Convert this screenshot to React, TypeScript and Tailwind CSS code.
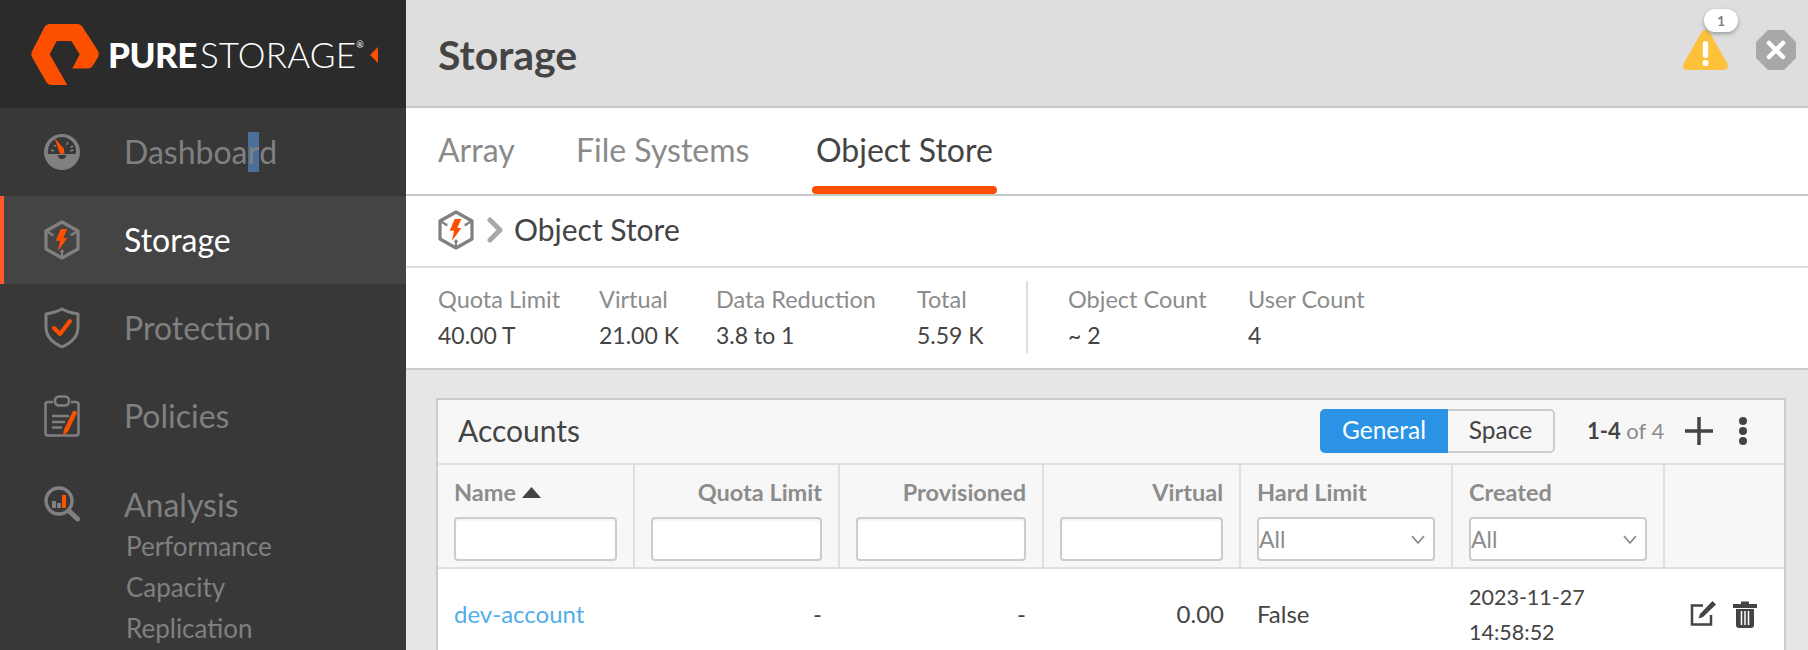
import React from "react";

const F = "font-['Lato','Liberation_Sans',sans-serif]";
const O = "#fc5000";
const G = "#808080";

function StorageIcon({ w = 36, h = 40, c = G }: { w?: number; h?: number; c?: string }) {
  return (
    <svg width={w} height={h} viewBox="0 0 36 40" fill="none">
      <path d="M18 2 L34 11 V29 L18 38 L2 29 V11 Z" stroke={c} strokeWidth="3.200" strokeLinejoin="round" />
      <path d="M3 11.500 L8 14.500 M33 11.500 L28 14.500 M18 37 V31" stroke={c} strokeWidth="2.200" />
      <path d="M6.500 16 L9.500 16 L9.500 13 Z M29.500 16 L26.500 16 L26.500 13 Z M15.500 32 H20.500 L18 29 Z" fill={c} />
      <path d="M16.700 9 H23.300 L19.300 18 H23.300 L14 31 L16 20.700 H11.700 Z" fill={O} />
    </svg>
  );
}

function GaugeIcon() {
  return (
    <svg width="36" height="36" viewBox="0 0 36 36">
      <circle cx="18" cy="18" r="18" fill={G} />
      <path d="M4.300 20 A14 14 0 1 1 31.700 20 Z" fill="#383838" />
      <path d="M22 20 A4 4 0 0 1 14 20 Z" fill="#383838" transform="translate(0 1)" />
      <path d="M7 16 L10 17 M26 17 L29.500 16 M24 8 L22.500 11 M29 12 L26.500 13.500 M10 11 L12 12.500" stroke={G} strokeWidth="1.500" />
      <path d="M10.500 4 L19.800 14.500 L20.500 19.500 L16 20 Z" fill={O} />
    </svg>
  );
}

function ShieldIcon() {
  return (
    <svg width="36" height="42" viewBox="0 0 36 42" fill="none">
      <path d="M18 2 C23 5 28 6 34 7 V20 C34 29 27 36 18 40 C9 36 2 29 2 20 V7 C8 6 13 5 18 2 Z" stroke={G} strokeWidth="3" strokeLinejoin="round" />
      <path d="M10 21 L16 27 L26 14" stroke={O} strokeWidth="4" strokeLinecap="round" strokeLinejoin="round" />
    </svg>
  );
}

function ClipboardIcon() {
  return (
    <svg width="36" height="42" viewBox="0 0 36 42" fill="none">
      <path d="M9 7 H4 Q1.500 7 1.500 9.500 V38 Q1.500 40.500 4 40.500 H32 Q34.500 40.500 34.500 38 V9.500 Q34.500 7 32 7 H27" stroke={G} strokeWidth="2.500" />
      <rect x="11" y="1.500" width="14" height="9" rx="4" stroke={G} strokeWidth="2.500" />
      <path d="M8 21 H25 M8 27 H21 M8 32.500 H18" stroke={G} strokeWidth="2.500" />
      <path d="M30.500 18 L22 35.500" stroke={O} strokeWidth="4.500" strokeLinecap="round" />
      <path d="M19.800 35.500 L19 40 L23 38 Z" fill={O} />
    </svg>
  );
}

function AnalysisIcon() {
  return (
    <svg width="36" height="36" viewBox="0 0 36 36" fill="none">
      <circle cx="15" cy="15" r="13" stroke={G} strokeWidth="3.500" />
      <path d="M25 25 L33.500 33" stroke={G} strokeWidth="5" strokeLinecap="round" />
      <rect x="8" y="15" width="4" height="7" fill={G} />
      <rect x="13" y="17" width="4" height="5" fill={G} />
      <rect x="18" y="9" width="4" height="13" fill={O} />
    </svg>
  );
}

function NavItem({ icon, label, active }: { icon: React.ReactNode; label: React.ReactNode; active?: boolean }) {
  return (
    <div className={`h-[88px] flex items-center ${active ? "bg-[#444444] border-l-4 border-[#ff5a2b] pl-[40px] text-white" : "pl-[44px] text-[#808080]"}`}>
      <div className="w-[36px] flex justify-center">{icon}</div>
      <div className="ml-[44px] text-[32px] leading-[40px]">{label}</div>
    </div>
  );
}

function Sidebar() {
  return (
    <aside className="w-[406px] shrink-0 bg-[#383838] h-full">
      <div className="h-[108px] bg-[#2b2b2b] relative flex items-center pl-[31px]">
        <svg width="68" height="61" viewBox="0 0 68 61" className="shrink-0 mt-[1px]">
          <path d="M18.500 0 H46 Q49.500 0 51.500 3 L66.800 26.500 Q68.800 30 66.800 33.500 L62 41.500 Q60.200 44.500 56.500 44.500 H41.300 L48.700 30.300 L40.300 17 H25.700 L18.700 30.300 L36.300 61 H20.500 Q17 61 15.300 58 L1.200 33.500 Q-0.500 30 1.200 27 L13.500 3 Q15.300 0 18.500 0 Z" fill={O} />
        </svg>
        <div className="ml-[9px] text-white text-[35px] leading-none whitespace-nowrap flex items-start mt-[1px]">
          <span className="font-black tracking-[-0.5px]">PURE</span>
          <span className="font-light ml-[3px] tracking-[0.2px]">STORAGE</span>
          <span className="text-[9px] mt-[3px]">®</span>
        </div>
        <div className="absolute left-[370px] top-[47px] w-0 h-0 border-y-[8px] border-y-transparent border-r-[8px] border-r-[#fc5000]" />
      </div>
      <NavItem
        icon={<GaugeIcon />}
        label={<>Dashboa<span className="inline-block h-[40px] bg-[#4a7099]">r</span>d</>}
      />
      <NavItem active icon={<StorageIcon />} label="Storage" />
      <NavItem icon={<ShieldIcon />} label="Protection" />
      <NavItem icon={<ClipboardIcon />} label="Policies" />
      <div className="h-[67px] flex items-start pl-[44px] pt-[26px] text-[#808080]">
        <div className="w-[36px]"><AnalysisIcon /></div>
        <div className="ml-[44px] text-[32px] leading-[38px]">Analysis</div>
      </div>
      <div className="pl-[126px] text-[26px] text-[#808080] -mt-[1px]">
        <div className="h-[41px] leading-[41px]">Performance</div>
        <div className="h-[41px] leading-[41px]">Capacity</div>
        <div className="h-[41px] leading-[41px]">Replication</div>
      </div>
    </aside>
  );
}

function Header() {
  return (
    <header className="h-[108px] bg-[#dedede] border-b-2 border-[#c8c8c8] relative flex items-center pl-[32px] pt-[3px]">
      <h1 className="text-[41px] font-bold text-[#444444]">Storage</h1>
      <div className="absolute left-[1277px] top-[30px]">
        <svg width="45" height="40" viewBox="0 0 45 40">
          <path d="M22.500 0 Q25 0 27 3 L44 33 Q47 40 40 40 H5 Q-2 40 1 33 L18 3 Q20 0 22.500 0 Z" fill="#fdc13c" />
          <rect x="19.800" y="11" width="5.400" height="17" rx="2.700" fill="#fff" />
          <circle cx="22.500" cy="33" r="3" fill="#fff" />
        </svg>
      </div>
      <div className="absolute left-[1298px] top-[9px] w-[34px] h-[23px] rounded-full bg-white shadow-[0_2px_4px_rgba(0,0,0,0.3)] flex items-center justify-center text-[14px] font-bold text-[#808080]">1</div>
      <div className="absolute left-[1350px] top-[30px]">
        <svg width="40" height="40" viewBox="0 0 40 40">
          <path d="M12 0 H28 L40 12 V28 L28 40 H12 L0 28 V12 Z" fill="#a8a8a8" />
          <path d="M13 13 L27 27 M27 13 L13 27" stroke="#fff" strokeWidth="4.500" strokeLinecap="round" />
        </svg>
      </div>
    </header>
  );
}

function Tabs() {
  return (
    <nav className="h-[88px] bg-white border-b-2 border-[#c8c8c8] flex pl-[32px] text-[32px] leading-[40px] pt-[22px]">
      <div className="w-[138px] text-[#8a8a8a]">Array</div>
      <div className="w-[240px] text-[#8a8a8a]">File Systems</div>
      <div className="relative text-[#444444] h-[64px]">
        Object Store
        <div className="absolute left-[-4px] right-[-4px] bottom-0 h-[8px] rounded-[4px] bg-[#fc5000]" />
      </div>
    </nav>
  );
}

function Breadcrumb() {
  return (
    <div className="h-[72px] bg-white border-b-2 border-[#dddddd] flex items-center pl-[32px] pb-[2px]">
      <StorageIcon />
      <svg width="16" height="26" viewBox="0 0 16 26" className="ml-[13px]">
        <path d="M3 3 L13 13 L3 23" stroke="#a8a8a8" strokeWidth="5" fill="none" strokeLinecap="round" strokeLinejoin="round" />
      </svg>
      <span className="ml-[11px] text-[30px] text-[#444444] -mt-[1px]">Object Store</span>
    </div>
  );
}

function Stat({ label, value, w }: { label: string; value: string; w: string }) {
  return (
    <div className={w}>
      <div className="text-[23.500px] leading-[30px] text-[#8c8c8c] whitespace-nowrap -mt-[1px]">{label}</div>
      <div className="text-[23px] leading-[30px] mt-[6px] text-[#444444]">{value}</div>
    </div>
  );
}

function Stats() {
  return (
    <div className="h-[102px] bg-white border-b-2 border-[#cccccc] flex items-center pl-[32px] pb-[2px]">
      <Stat label="Quota Limit" value="40.00 T" w="w-[161px]" />
      <Stat label="Virtual" value="21.00 K" w="w-[117px]" />
      <Stat label="Data Reduction" value="3.8 to 1" w="w-[201px]" />
      <Stat label="Total" value="5.59 K" w="w-[109px]" />
      <div className="w-[2px] h-[72px] bg-[#dddddd] mr-[40px]" />
      <Stat label="Object Count" value="~ 2" w="w-[180px]" />
      <Stat label="User Count" value="4" w="w-[160px]" />
    </div>
  );
}

const COLS = "grid grid-cols-[197px_205px_204px_197px_212px_212px_119px]";
const CELL = "border-r-2 border-[#e0e0e0] pl-4 pr-[16px] pt-[13px]";

function HeadCell({ label, right, children, last }: { label?: React.ReactNode; right?: boolean; children?: React.ReactNode; last?: boolean }) {
  return (
    <div className={last ? "" : CELL}>
      <div className={`h-[28px] leading-[28px] text-[23.500px] font-bold text-[#8c8c8c] mb-[11px] whitespace-nowrap ${right ? "text-right" : ""}`}>{label}</div>
      {children}
    </div>
  );
}

function Box() {
  return <input className="block w-full h-[44px] bg-white border-2 border-[#cccccc] rounded-[4px] shadow-[inset_0_2px_2px_rgba(0,0,0,0.05)]" />;
}

function Sel() {
  return (
    <div className="flex items-center justify-between w-full h-[44px] bg-white border-2 border-[#cccccc] rounded-[4px] pl-0 pr-[8px] text-[23px] text-[#8c8c8c]">
      <span>All</span>
      <svg width="14" height="9" viewBox="0 0 14 9" fill="none"><path d="M1 1 L7 8 L13 1" stroke="#808080" strokeWidth="1.500" /></svg>
    </div>
  );
}

function Card() {
  return (
    <section className="mt-[28px] ml-[30px] w-[1350px] border-2 border-[#cccccc] bg-white">
      <div className="h-[65px] bg-[#f7f7f7] border-b-2 border-[#e0e0e0] flex items-center pl-[20px] pb-[2px]">
        <span className="text-[30px] text-[#444444]">Accounts</span>
        <div className="ml-auto flex h-[44px] text-[24.500px]">
          <div className="w-[128px] bg-[#2a93e6] text-white rounded-l-[5px] flex items-center justify-center">General</div>
          <div className="w-[107px] border-2 border-l-0 border-[#cccccc] rounded-r-[5px] text-[#444444] flex items-center justify-center">Space</div>
        </div>
        <div className="ml-[32px] w-[78px] text-[22px] text-[#8c8c8c] whitespace-nowrap"><b className="text-[#444444]">1-4</b> of 4</div>
        <svg width="28" height="28" viewBox="0 0 28 28" className="ml-[20px]"><path d="M0 14 H28 M14 0 V28" stroke="#444444" strokeWidth="3.500" /></svg>
        <svg width="8" height="28" viewBox="0 0 8 28" className="ml-[26px] mr-[37px]">
          <circle cx="4" cy="4" r="4" fill="#444444" /><circle cx="4" cy="14" r="4" fill="#444444" /><circle cx="4" cy="24" r="4" fill="#444444" />
        </svg>
      </div>
      <div className={`${COLS} h-[104px] bg-[#f7f7f7] border-b-2 border-[#e0e0e0]`}>
        <HeadCell label={<span className="flex items-center gap-[6px]">Name<svg width="19" height="11" viewBox="0 0 19 11"><path d="M9.500 0 L19 11 H0 Z" fill="#444444" /></svg></span>}><Box /></HeadCell>
        <HeadCell label="Quota Limit" right><Box /></HeadCell>
        <HeadCell label="Provisioned" right><Box /></HeadCell>
        <HeadCell label="Virtual" right><Box /></HeadCell>
        <HeadCell label="Hard Limit"><Sel /></HeadCell>
        <HeadCell label="Created"><Sel /></HeadCell>
        <HeadCell last />
      </div>
      <div className={`${COLS} text-[24px] text-[#444444] items-center h-[90px]`}>
        <div className="pl-4 text-[#52ade9]">dev-account</div>
        <div className="pr-[18px] text-right">-</div>
        <div className="pr-[18px] text-right">-</div>
        <div className="pr-[17px] text-right">0.00</div>
        <div className="pl-4">False</div>
        <div className="pl-4 text-[21.500px] leading-[35px] pt-[2px]">2023-11-27<br />14:58:52</div>
        <div className="flex items-center pl-[25px] gap-[17px]">
          <svg width="26" height="26" viewBox="0 0 26 26" fill="none">
            <path d="M21 14 V23.500 H2 V4.500 H13" stroke="#444444" strokeWidth="2.500" />
            <path d="M22.500 0 L26 3.500 L13 16 L8.500 17.500 L10 13 Z" fill="#444444" />
          </svg>
          <svg width="24" height="28" viewBox="0 0 24 28" fill="none">
            <path d="M0 4 H8 V1.500 H16 V4 H24 V8 H0 Z" fill="#444444" />
            <path d="M3 9 H21 V25 Q21 28 18 28 H6 Q3 28 3 25 Z" fill="#444444" />
            <path d="M8.500 11 V25 M12 11 V25 M15.500 11 V25" stroke="#fff" strokeWidth="1.500" />
          </svg>
        </div>
      </div>
    </section>
  );
}

export default function App() {
  return (
    <div className={`${F} flex h-[650px] w-[1808px] overflow-hidden bg-[#e6e6e6]`}>
      <Sidebar />
      <main className="flex-1 min-w-0">
        <Header />
        <Tabs />
        <Breadcrumb />
        <Stats />
        <Card />
      </main>
    </div>
  );
}
